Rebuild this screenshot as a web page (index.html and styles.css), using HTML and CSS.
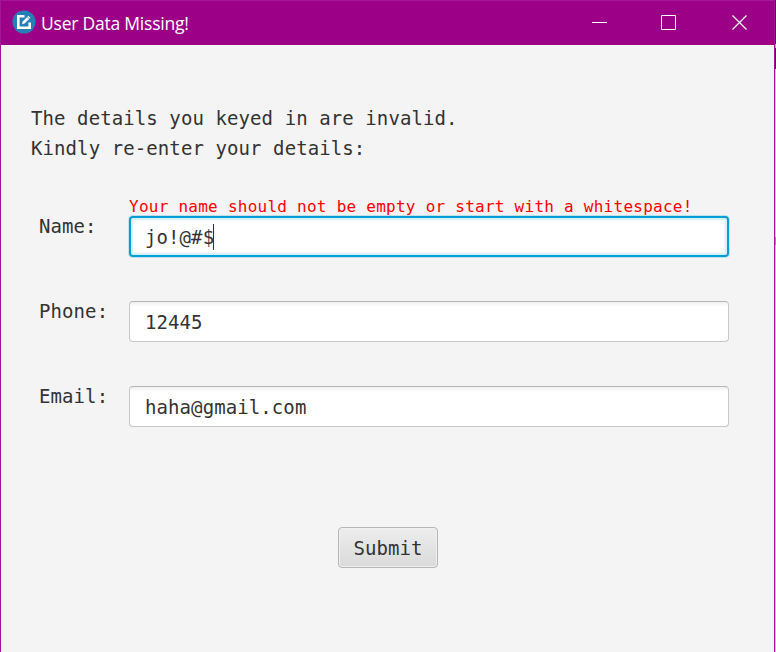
FILE: index.html
```html
<!DOCTYPE html>
<html lang="en">
<head>
<meta charset="utf-8">
<title>User Data Missing!</title>
<link rel="stylesheet" href="styles.css">
</head>
<body>
<div class="desktop">
<div class="window">
  <header class="titlebar">
    <svg class="app-icon" viewBox="0 0 24 24"><circle cx="12" cy="12" r="11.5" fill="#267eb8"/><path d="M12.500 6.300H6.300v11.400h11.400v-5.200" fill="none" stroke="#fff" stroke-width="2.600"/><path d="M10 14.200l.7-2.700 5.700-5.800 2 2-5.800 5.800z" fill="#fff"/><path d="M15.300 6.800l2 2" stroke="#267eb8" stroke-width=".8"/></svg>
    <h1 class="title">User Data Missing!</h1>
    <svg class="controls" viewBox="0 0 156 17"><g fill="none" stroke="#fff"><path d="M0 8.500h15M69.500 1.500h14v14h-14z"/><path d="M140.500 1.500l14 14M154.500 1.500l-14 14" stroke-width="1.200"/></g></svg>
  </header>
  <main class="content">
    <p class="intro">The details you keyed in are invalid.<br>Kindly re-enter your details:</p>
    <form class="form">
      <div class="row">
        <span class="label">Name:</span>
        <div class="cell"><div class="error">Your name should not be empty or start with a whitespace!</div><div class="field focused">jo!@#$<span class="caret"></span></div></div>
      </div>
      <div class="row">
        <span class="label">Phone:</span>
        <div class="cell"><div class="error"></div><div class="field">12445</div></div>
      </div>
      <div class="row">
        <span class="label">Email:</span>
        <div class="cell"><div class="error"></div><div class="field">haha@gmail.com</div></div>
      </div>
      <button class="submit" type="button">Submit</button>
    </form>
  </main>
</div>
<div class="backdrop"></div>
</div>
</body>
</html>
```
FILE: styles.css
```css
* { box-sizing: border-box; }
body { margin: 0; overflow: hidden; }
.desktop { display: flex; width: 776px; height: 652px; }
.window {
  width: 775px;
  background: #f4f4f4;
  border: 1px solid #a3169a;
  border-bottom: 0;
  color: #333;
  font-family: "DejaVu Sans Mono", "Liberation Mono", monospace;
  font-size: 19px;
  letter-spacing: 0.09px;
}
.backdrop {
  width: 1px;
  background: linear-gradient(#3b263a 0 44px, #aaa 44px 48px, #3b263a 48px 69px, #d9c5d9 69px 237px, #9b8b9b 237px 245px, #d0bdd0 245px);
}
.titlebar {
  display: flex;
  align-items: center;
  height: 44px;
  padding: 0 26px 0 11px;
  background: #9b0087;
  color: #fff;
}
.app-icon { width: 24px; height: 24px; margin-bottom: 2px; }
.title {
  margin: 0 0 0 5px;
  font: 400 17.5px/24px "Open Sans", "Noto Sans", sans-serif;
  letter-spacing: -0.22px;
  white-space: nowrap;
}
.controls { width: 156px; height: 17px; margin: 0 0 1px auto; }
.content { padding: 58px 45px 0 30px; }
.intro { height: 60px; margin: 0; line-height: 30px; white-space: nowrap; }
.form { display: flex; flex-direction: column; padding-top: 34px; }
.row { display: flex; height: 85px; }
.label { width: 98px; padding: 14px 0 0 8px; line-height: 30px; }
.cell { width: 600px; }
.error {
  height: 19px;
  color: #f00;
  font-size: 16px;
  line-height: 20px;
  letter-spacing: 0.255px;
  white-space: nowrap;
}
.field {
  display: flex;
  align-items: center;
  height: 41px;
  padding: 0 15px 0 15px;
  border: 1px solid #c8c8c8;
  border-top-color: #b5b5b5;
  border-radius: 4px;
  background: linear-gradient(#f0f0f0, #fff 5px);
}
.focused {
  border: 2px solid #039ed3;
  background: #fff;
  padding-left: 14px;
  box-shadow: 0 0 0 1px #c1e2ed, inset 0 0 0 2px #d9f1f8, inset 0 0 0 3px #f3fafc;
}
.caret { width: 1px; height: 26px; margin-left: -1px; background: #333; }
.submit {
  align-self: center;
  width: 100px;
  height: 41px;
  margin: 75px 0 0 16px;
  padding: 0;
  border: 1px solid #b5b5b5;
  border-radius: 4px;
  background: linear-gradient(#ededed, #dadada);
  box-shadow: inset 0 0 0 1px #f0f0f0;
  color: #333;
  font: inherit;
  letter-spacing: inherit;
}
```
